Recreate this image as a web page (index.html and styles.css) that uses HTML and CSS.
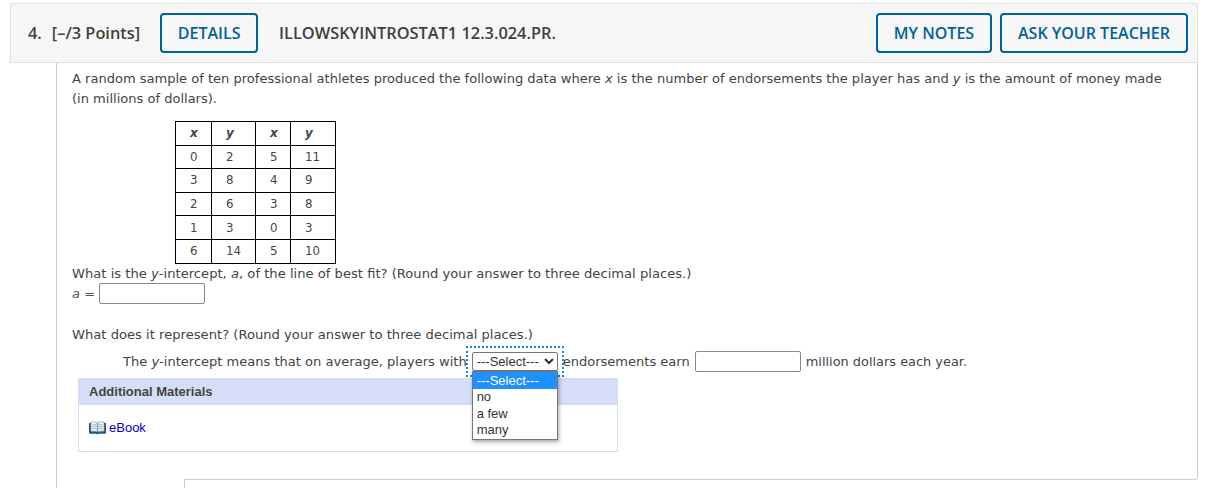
FILE: index.html
```html
<!DOCTYPE html>
<html lang="en">
<head>
<meta charset="utf-8">
<title>Question 4</title>
<link rel="stylesheet" href="styles.css">
</head>
<body>
<div class="question">
  <header class="qhead">
    <span class="qnum">4.</span>
    <span class="points">[–/3 Points]</span>
    <button class="btn btn-details">DETAILS</button>
    <span class="qcode">ILLOWSKYINTROSTAT1 12.3.024.PR.</span>
    <button class="btn btn-notes">MY NOTES</button>
    <button class="btn btn-ask">ASK YOUR TEACHER</button>
  </header>
  <div class="qbody">
    <div class="edge"></div>
    <p class="intro">A random sample of ten professional athletes produced the following data where <i>x</i> is the number of endorsements the player has and <i>y</i> is the amount of money made (in millions of dollars).</p>
    <table class="data">
      <colgroup><col class="c1"><col class="c2"><col class="c3"><col class="c4"></colgroup>
      <tr><th>x</th><th>y</th><th>x</th><th>y</th></tr>
      <tr><td>0</td><td>2</td><td>5</td><td>11</td></tr>
      <tr><td>3</td><td>8</td><td>4</td><td>9</td></tr>
      <tr><td>2</td><td>6</td><td>3</td><td>8</td></tr>
      <tr><td>1</td><td>3</td><td>0</td><td>3</td></tr>
      <tr><td>6</td><td>14</td><td>5</td><td>10</td></tr>
    </table>
    <p class="line">What is the <i>y</i>-intercept, <i>a</i>, of the line of best fit? (Round your answer to three decimal places.)</p>
    <div class="answer"><span class="alabel"><i>a</i> =</span><input class="field" type="text" aria-label="a"></div>
    <p class="line repr">What does it represent? (Round your answer to three decimal places.)</p>
    <div class="sentence">
      <span>The <i>y</i>-intercept means that on average, players with</span>
      <span class="focus">
        <select class="pick" aria-label="endorsements"><option>---Select---</option><option>no</option><option>a few</option><option>many</option></select>
        <span class="menu">
          <span class="opt sel">---Select---</span>
          <span class="opt">no</span>
          <span class="opt">a few</span>
          <span class="opt">many</span>
        </span>
      </span>
      <span>endorsements earn</span>
      <input class="field field2" type="text" aria-label="million dollars">
      <span class="tail">million dollars each year.</span>
    </div>
    <section class="materials">
      <h3 class="mhead">Additional Materials</h3>
      <div class="mbody">
        <svg class="book" viewBox="0 0 18 15" width="17" height="14" aria-hidden="true">
          <path d="M0.5 2.5H17.5V13H10.5L9 14L7.5 13H0.5Z" fill="#1f5c8c" stroke="#1b4a70"/>
          <path d="M2 1.2C4 .6 7 .8 8.7 2V11.8C7 10.8 4 10.6 2 11.2Z" fill="#eef3f8" stroke="#6d8aa3" stroke-width=".6"/>
          <path d="M16 1.2C14 .6 11 .8 9.3 2V11.8C11 10.8 14 10.6 16 11.2Z" fill="#eef3f8" stroke="#6d8aa3" stroke-width=".6"/>
          <path d="M3.5 4H7.5M3.5 6H7.5M3.5 8H7.5M10.5 4H14.5M10.5 6H14.5M10.5 8H14.5" stroke="#8fa5b8" stroke-width=".8"/>
        </svg>
        <a class="ebook" href="#">eBook</a>
      </div>
    </section>
    <div class="next"></div>
  </div>
</div>
</body>
</html>
```
FILE: styles.css
```css
html, body { margin: 0; padding: 0; background: #fff; }
body { height: 488px; overflow: hidden; font-family: "DejaVu Sans", sans-serif; font-size: 13.04px; color: #444; }
.question { padding: 3px 7px 0 10px; }
.qhead {
  display: flex; align-items: center; height: 60px; box-sizing: border-box;
  padding: 0 9px 0 17px; background: #f6f6f6; border: 1px solid #e0e0e0;
  font-family: "Open Sans", sans-serif; font-size: 16.35px; font-weight: 600; color: #3f3f3f;
}
.qnum { margin-right: 10px; }
.points { margin-right: 20px; }
.qcode { margin-left: 21px; margin-right: auto; }
.btn {
  height: 40px; box-sizing: border-box; padding: 0; background: #f6f6f6;
  border: 2px solid #00629b; border-radius: 4px; color: #00629b;
  font-family: "Open Sans", sans-serif; font-size: 16px; font-weight: 600;
}
.btn-details { width: 98px; }
.btn-notes { width: 116px; margin-right: 8px; }
.btn-ask { width: 188px; }
.qbody {
  margin-left: 46px; height: 425px; box-sizing: border-box; padding: 6px 0 0 15px;
  border-left: 1px solid #ccc; position: relative;
}
.edge {
  position: absolute; left: 127px; right: 0; top: 0; height: 416px;
  border-right: 1px solid #ccc; border-bottom: 1px solid #ccc; border-bottom-right-radius: 4px;
  pointer-events: none;
}
.intro { margin: 0; width: 1105px; line-height: 20px; }
.data {
  margin: 12px 0 0 103px; border-collapse: collapse; table-layout: fixed; width: 160px;
  font-size: 11.8px; text-align: left; color: #444;
}
.c1 { width: 36px; } .c2 { width: 44px; } .c3 { width: 35px; } .c4 { width: 45px; }
.data th, .data td { border: 1px solid #000; height: 22.6px; padding: 0 0 0 14px; }
.data th { font-style: italic; font-weight: bold; font-size: 12px; }
.line { margin: 0; line-height: 20px; font-size: 13.14px; }
.answer { display: flex; align-items: center; height: 20px; }
.alabel { width: 27px; flex: none; color: #555; }
.field {
  width: 106px; height: 21px; box-sizing: border-box; margin: 0; padding: 0;
  border: 1px solid #8a8a8a; border-radius: 2px; background: #fff;
}
.repr { margin-top: 21px; }
.sentence { display: flex; align-items: center; height: 21px; margin: 6px 0 0 51px; white-space: nowrap; }
.tail { font-size: 12.92px; }
.focus {
  position: relative; display: block; width: 98px; height: 31px; box-sizing: border-box;
  margin: 0 -1px 0 -1px; padding: 4px; border: 2px dotted #1a80e8; flex: none;
}
.pick {
  display: block; width: 86px; height: 19px; box-sizing: border-box; margin: 0; padding: 0;
  border: 1px solid #767676; border-radius: 2px; background: #fff; color: #333;
  font-family: "Liberation Sans", sans-serif; font-size: 13px;
}
.menu {
  position: absolute; left: 4px; top: 23px; width: 86px; box-sizing: border-box; z-index: 2;
  border: 1px solid #767676; background: #fff; box-shadow: 1px 2px 4px rgba(0,0,0,.35);
  font-family: "Liberation Sans", sans-serif; font-size: 13px; color: #333;
}
.opt { display: block; height: 16.4px; line-height: 16.4px; padding-left: 4px; }
.opt.sel { height: 17.8px; line-height: 17.8px; background: #1e90ff; color: #fff; }
.field2 { margin: 0 5px; }
.materials { width: 540px; margin: 6px 0 0 6px; }
.mhead {
  margin: 0; height: 27px; line-height: 27px; padding-left: 11px; background: #d6ddf6;
  font-family: "Liberation Sans", sans-serif; font-size: 13px; font-weight: bold; color: #444;
}
.mbody {
  display: flex; align-items: center; gap: 3px; height: 47px; box-sizing: border-box; padding-left: 10px;
  border: 1px solid #d6ddf6; border-top: 0;
}
.book { display: block; flex: none; }
.ebook { font-family: "Liberation Sans", sans-serif; font-size: 13px; color: #0000d8; text-decoration: none; }
.next {
  position: absolute; left: 127px; right: 0; bottom: 0; top: 416px;
  border-left: 1px solid #ccc;
}
```
